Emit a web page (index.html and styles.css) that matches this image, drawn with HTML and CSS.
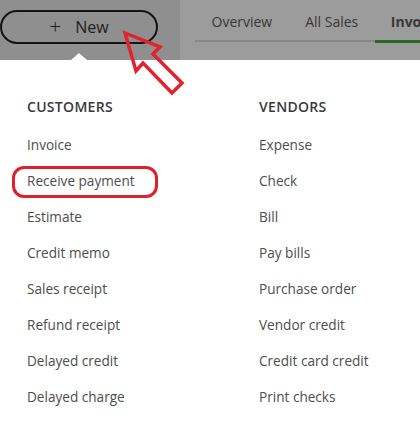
FILE: index.html
```html
<!DOCTYPE html>
<html lang="en">
<head>
  <meta charset="UTF-8" />
  <title>New menu</title>
  <link rel="stylesheet" href="styles.css">
</head>
<body>
  <header class="topbar">
    <div class="topbar-left">
      <button class="new-btn"><span class="plus">+</span>New</button>
    </div>
    <nav class="tabs">
      <a class="tab">Overview</a>
      <a class="tab">All Sales</a>
      <a class="tab active">Invoices</a>
    </nav>
  </header>

  <div class="menu">
    <div class="menu-col">
      <h3>CUSTOMERS</h3>
      <ul>
        <li>Invoice</li>
        <li class="marked">Receive payment</li>
        <li>Estimate</li>
        <li>Credit memo</li>
        <li>Sales receipt</li>
        <li>Refund receipt</li>
        <li>Delayed credit</li>
        <li>Delayed charge</li>
      </ul>
    </div>
    <div class="menu-col">
      <h3>VENDORS</h3>
      <ul>
        <li>Expense</li>
        <li>Check</li>
        <li>Bill</li>
        <li>Pay bills</li>
        <li>Purchase order</li>
        <li>Vendor credit</li>
        <li>Credit card credit</li>
        <li>Print checks</li>
      </ul>
    </div>
  </div>

  <!-- annotation arrow pointing at the New button -->
  <svg class="arrow" width="90" height="90" viewBox="110 20 90 90">
    <polygon points="125,33 160,47 153,54 182,83 172,93 143,63 136,71"
             fill="none" stroke="#e3222b" stroke-width="3.5" stroke-linejoin="miter" />
  </svg>
</body>
</html>
```

FILE: styles.css
```css
body {
  margin: 0;
  background: #fff;
  font-family: "Open Sans", Lato, sans-serif;
  color: #4d4d4d;
  width: 420px;
  height: 426px;
  overflow: hidden;
  position: relative;
}

.topbar {
  display: flex;
  height: 60px;
}

.topbar-left {
  flex: 0 0 180px;
  background: #8f8f8f;
  padding-top: 10px;
  box-sizing: border-box;
}

.new-btn {
  width: 158px;
  height: 34px;
  border: 2px solid #141414;
  border-radius: 17px;
  background: transparent;
  font-family: inherit;
  font-size: 16px;
  color: #1e1e1e;
  display: flex;
  align-items: center;
  justify-content: center;
  padding: 0;
}

.plus {
  font-size: 21px;
  font-weight: 300;
  margin-right: 14px;
  margin-top: -2px;
}

.tabs {
  flex: 1;
  min-width: 0;
  overflow: hidden;
  background: #9c9c9c;
  display: flex;
  align-items: flex-start;
  padding: 12px 0 0 15px;
}

.tab {
  flex-shrink: 0;
  padding: 0 16.5px 8px;
  font-size: 14px;
  line-height: 20px;
  color: #383838;
  border-bottom: 2px solid #888;
  white-space: nowrap;
}

.tab.active {
  font-weight: 700;
  padding-left: 16px;
  border-bottom: 3px solid #2a6a1e;
  margin-top: -1px;
  padding-top: 1px;
}

.menu {
  position: relative;
  display: flex;
  margin-left: 2px;
  background: #fff;
  border-radius: 4px 0 0 0;
  padding: 37px 0 0 25px;
  height: 366px;
  box-sizing: border-box;
}

.menu::before {
  content: "";
  position: absolute;
  top: -7px;
  left: 69px;
  border-left: 8px solid transparent;
  border-right: 8px solid transparent;
  border-bottom: 7px solid #fff;
}

.menu-col {
  flex: 0 0 232px;
}

.menu-col h3 {
  margin: 0 0 10px;
  font-size: 14px;
  line-height: 20px;
  font-weight: 600;
  letter-spacing: 0.3px;
  color: #393a3d;
}

.menu-col ul {
  list-style: none;
  margin: 0;
  padding: 0;
}

.menu-col li {
  font-size: 13.6px;
  line-height: 36px;
  white-space: nowrap;
}

.marked {
  position: relative;
}

.marked::after {
  content: "";
  position: absolute;
  left: -15px;
  top: 3px;
  width: 146px;
  height: 32px;
  box-sizing: border-box;
  border: 3.5px solid #e0202b;
  border-radius: 12px;
}

.arrow {
  position: absolute;
  left: 110px;
  top: 20px;
}
```
